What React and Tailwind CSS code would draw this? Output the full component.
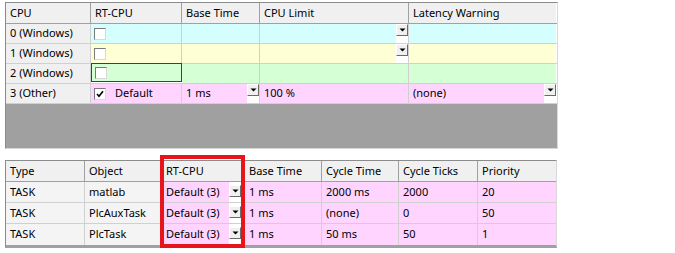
const CYAN = "bg-[#d5ffff]";
const YELLOW = "bg-[#ffffd5]";
const GREEN = "bg-[#d5ffd5]";
const PINK = "bg-[#ffd5ff]";

const DropButton = ({ offset = "" }) => (
  <div className={`w-[12px] flex flex-col bg-white ${offset}`}>
    <div className="h-[12px] bg-[#f0f0f0] border-t border-l border-t-white border-l-white border-b border-r border-b-[#6b6b6b] border-r-[#6b6b6b] flex items-center justify-center">
      <svg width="7" height="4" viewBox="0 0 7 4">
        <path d="M0.5 0.5 L6.5 0.5 L3.5 3.5 Z" fill="#000" />
      </svg>
    </div>
  </div>
);

const Checkbox = ({ checked }) => (
  <div className="w-[12px] h-[12px] bg-white border border-t-[#7a7a7a] border-l-[#7a7a7a] border-b-[#d8d8d8] border-r-[#d8d8d8] flex items-center justify-center">
    {checked && (
      <svg width="8" height="8" viewBox="0 0 8 8">
        <path d="M1 4 L3 6.3 L7 1.2" stroke="#000" strokeWidth="1.6" fill="none" />
      </svg>
    )}
  </div>
);

const Cell = ({ w, bg = "", last = false, children, drop = false, className = "" }) => (
  <div
    className={`${w} h-full flex shrink-0 ${last ? "" : "border-r border-[#d0d0d0]"} ${className}`}
  >
    <div className={`flex-1 flex items-center pl-[4px] ${bg}`}>{children}</div>
    {drop && <DropButton />}
  </div>
);

const HeadCell = ({ w, last = false, children }) => (
  <div
    className={`${w} h-full shrink-0 flex items-center pl-[4px] bg-[#f0f0f0] ${last ? "" : "border-r border-[#a0a0a0]"}`}
  >
    {children}
  </div>
);

const topCols = ["w-[85px]", "w-[91px]", "w-[78px]", "w-[149px]", "w-[147px]"];
const botCols = ["w-[79px]", "w-[77px]", "w-[83px]", "w-[77px]", "w-[77px]", "w-[79px]", "w-[78px]"];

const topRows = [
  { cpu: "0 (Windows)", bg: CYAN, limitDrop: true },
  { cpu: "1 (Windows)", bg: YELLOW, limitDrop: true },
  { cpu: "2 (Windows)", bg: GREEN, focus: true },
];

const tasks = [
  { obj: "matlab", cycle: "2000 ms", ticks: "2000", prio: "20" },
  { obj: "PlcAuxTask", cycle: "(none)", ticks: "0", prio: "50" },
  { obj: "PlcTask", cycle: "50 ms", ticks: "50", prio: "1" },
];

export default function App() {
  return (
    <div
      className="relative w-[675px] h-[253px] bg-white text-[11px] text-black overflow-hidden"
      style={{ fontFamily: '"Noto Sans", "DejaVu Sans", sans-serif' }}
    >
      {/* CPU table */}
      <div className="ml-[5px] mt-[2px] w-[553px] border border-[#8c8c8c] border-r-[#d8d8d8] border-b-[#d8d8d8]">
        <div className="h-[21px] flex border-b border-[#a0a0a0]">
          <HeadCell w={topCols[0]}>CPU</HeadCell>
          <HeadCell w={topCols[1]}>RT-CPU</HeadCell>
          <HeadCell w={topCols[2]}>Base Time</HeadCell>
          <HeadCell w={topCols[3]}>CPU Limit</HeadCell>
          <HeadCell w={topCols[4]} last>Latency Warning</HeadCell>
        </div>
        {topRows.map((r) => (
          <div key={r.cpu} className="h-[20px] flex border-b border-[#d0d0d0]">
            <Cell w={topCols[0]} bg="bg-[#f0f0f0]">{r.cpu}</Cell>
            <div
              className={`${topCols[1]} h-full shrink-0 flex items-center pl-[3px] ${r.bg} ${
                r.focus ? "border border-[#404040] -mt-px h-[21px]" : "border-r border-[#d0d0d0]"
              }`}
            >
              <Checkbox />
            </div>
            <Cell w={topCols[2]} bg={r.bg} />
            <Cell w={topCols[3]} bg={r.bg} drop={r.limitDrop} />
            <Cell w={topCols[4]} bg={r.bg} last />
          </div>
        ))}
        <div className="h-[20px] flex border-b border-[#d0d0d0]">
          <Cell w={topCols[0]} bg="bg-[#f0f0f0]">3 (Other)</Cell>
          <div className={`${topCols[1]} h-full shrink-0 flex items-center gap-[9px] pl-[3px] ${PINK} border-r border-[#d0d0d0]`}>
            <Checkbox checked />
            <span>Default</span>
          </div>
          <Cell w={topCols[2]} bg={PINK} drop>1 ms</Cell>
          <Cell w={topCols[3]} bg={PINK}>100 %</Cell>
          <Cell w={topCols[4]} bg={PINK} drop last>(none)</Cell>
        </div>
        <div className="h-[44px] bg-[#a0a0a0]" />
      </div>

      {/* Task table */}
      <div className="ml-[5px] mt-[11px] w-[552px] border border-[#8c8c8c] border-b-[3px] border-b-[#a0a0a0] border-r-[#d8d8d8]">
        <div className="h-[21px] flex border-b border-[#a0a0a0]">
          <HeadCell w={botCols[0]}>Type</HeadCell>
          <HeadCell w={botCols[1]}>Object</HeadCell>
          <HeadCell w={botCols[2]}>RT-CPU</HeadCell>
          <HeadCell w={botCols[3]}>Base Time</HeadCell>
          <HeadCell w={botCols[4]}>Cycle Time</HeadCell>
          <HeadCell w={botCols[5]}>Cycle Ticks</HeadCell>
          <HeadCell w={botCols[6]} last>Priority</HeadCell>
        </div>
        {tasks.map((t, i) => (
          <div
            key={t.obj}
            className={`h-[21px] flex ${i < tasks.length - 1 ? "border-b border-[#d0d0d0]" : ""}`}
          >
            <Cell w={botCols[0]} bg="bg-[#f4f4f4]">TASK</Cell>
            <Cell w={botCols[1]} bg="bg-[#f4f4f4]">{t.obj}</Cell>
            <div className={`${botCols[2]} h-full shrink-0 flex border-r border-[#d0d0d0] ${PINK}`}>
              <div className="flex-1 flex items-center pl-[4px]">Default (3)</div>
              <div className="w-[12px] mr-[3px] pt-[3px] bg-white">
                <div className="h-[12px] bg-[#f0f0f0] border-t border-l border-t-white border-l-white border-b border-r border-b-[#6b6b6b] border-r-[#6b6b6b] flex items-center justify-center">
                  <svg width="7" height="4" viewBox="0 0 7 4">
                    <path d="M0.5 0.5 L6.5 0.5 L3.5 3.5 Z" fill="#000" />
                  </svg>
                </div>
              </div>
            </div>
            <Cell w={botCols[3]} bg={PINK}>1 ms</Cell>
            <Cell w={botCols[4]} bg={PINK}>{t.cycle}</Cell>
            <Cell w={botCols[5]} bg={PINK}>{t.ticks}</Cell>
            <Cell w={botCols[6]} bg={PINK} last>{t.prio}</Cell>
          </div>
        ))}
      </div>

      {/* red highlight over RT-CPU column */}
      <div className="absolute left-[160px] top-[155px] w-[85px] h-[93px] border-4 border-[#e8141c]" />
    </div>
  );
}
